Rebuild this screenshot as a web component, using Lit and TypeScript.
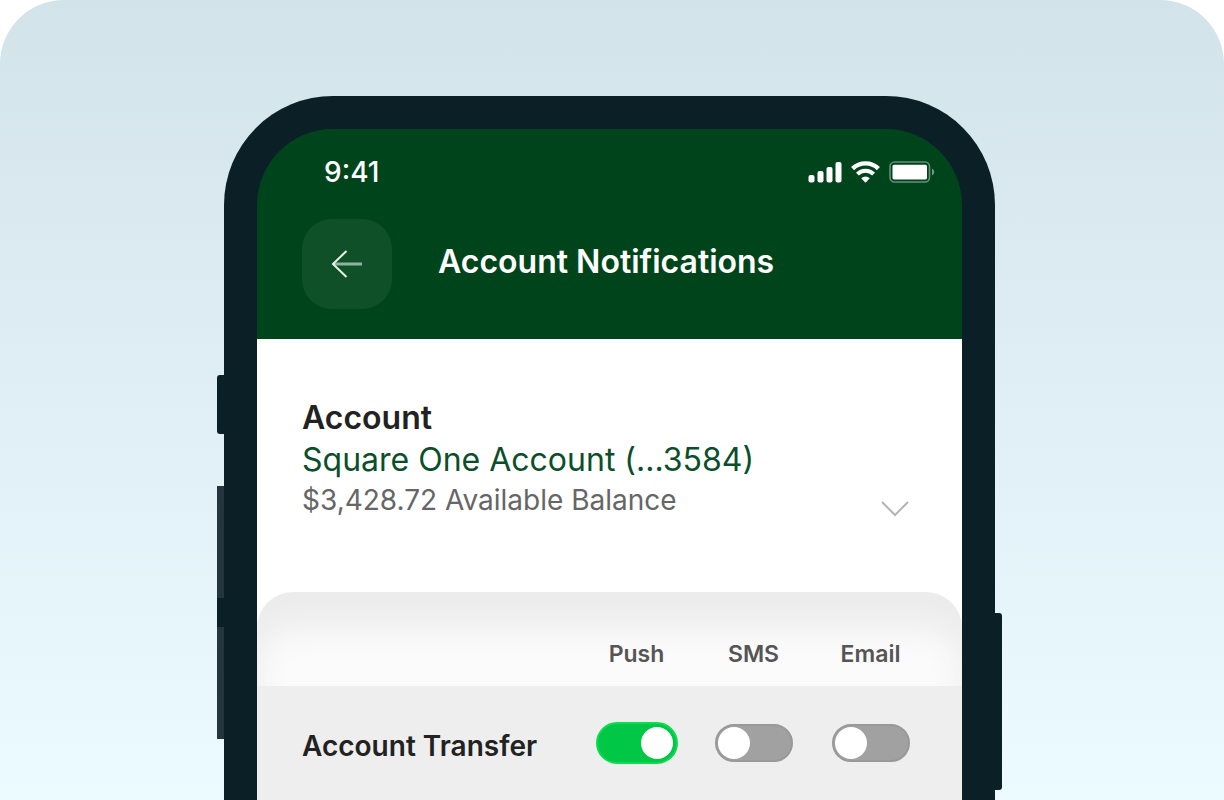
import { LitElement, html, css } from "lit";
import { customElement, property, state } from "lit/decorators.js";

type Channel = "push" | "sms" | "email";

interface AlertRow {
  id: string;
  name: string;
  on: Record<Channel, boolean>;
}

const CHANNELS: { id: Channel; label: string }[] = [
  { id: "push", label: "Push" },
  { id: "sms", label: "SMS" },
  { id: "email", label: "Email" },
];

@customElement("status-bar")
export class StatusBar extends LitElement {
  @property() time = "9:41";

  static styles = css`
    :host {
      display: flex;
      align-items: center;
      justify-content: space-between;
      height: 86px;
      padding: 0 27px 0 67px;
    }
    .time {
      font-size: 28px;
      line-height: 32px;
      font-weight: 500;
    }
    .icons {
      display: flex;
      align-items: center;
      gap: 9px;
    }
    svg {
      display: block;
    }
  `;

  render() {
    return html`
      <span class="time">${this.time}</span>
      <span class="icons">
        <svg width="34" height="22" viewBox="0 0 34 22" fill="#fff" aria-hidden="true">
          <rect x="0.5" y="14" width="6" height="7.5" rx="2" />
          <rect x="9.5" y="10" width="6" height="11.5" rx="2" />
          <rect x="18.5" y="6" width="6" height="15.5" rx="2" />
          <rect x="27.5" y="1" width="6" height="20.5" rx="2" />
        </svg>
        <svg width="29" height="22" viewBox="0 0 29 22" fill="none" aria-hidden="true">
          <path d="M1.6 7.6A18.6 18.6 0 0 1 27.4 7.6" stroke="#fff" stroke-width="4.4" />
          <path d="M6.4 13.2A11.4 11.4 0 0 1 22.6 13.2" stroke="#fff" stroke-width="4" />
          <path d="M14.5 21.8L10.2 17.2A6 6 0 0 1 18.8 17.2Z" fill="#fff" />
        </svg>
        <svg width="46" height="22" viewBox="0 0 46 22" fill="none" aria-hidden="true">
          <rect x="1" y="1" width="39.5" height="20" rx="4.5" stroke="#fff" stroke-opacity="0.4" stroke-width="1.6" />
          <rect x="3.5" y="3.8" width="34.5" height="14.6" rx="1.6" fill="#fff" />
          <path d="M43 7.5V14.5C44.4 13.8 45.2 12.5 45.2 11S44.4 8.2 43 7.5Z" fill="#fff" fill-opacity="0.45" />
        </svg>
      </span>
    `;
  }
}

@customElement("app-root")
export class AppRoot extends LitElement {
  @state() private rows: AlertRow[] = [
    { id: "transfer", name: "Account Transfer", on: { push: true, sms: false, email: false } },
  ];

  static styles = css`
    :host {
      display: block;
      background: #fff;
      font-family: Inter, "Open Sans", sans-serif;
    }
    * {
      box-sizing: border-box;
    }
    .stage {
      display: flex;
      flex-direction: column;
      min-height: 100vh;
      padding: 96px 229px 0 224px;
      border-radius: 64px 64px 0 0;
      background: linear-gradient(#d2e3e9, #deedf4 42%, #ecfbff);
      overflow: hidden;
    }
    .phone {
      position: relative;
      flex: 1;
      display: flex;
      flex-direction: column;
      padding: 33px 33px 0;
      border-radius: 109px 109px 0 0;
      background: #0b1f27;
    }
    .key {
      position: absolute;
      width: 7px;
      background: #0b1f27;
    }
    .key.mute {
      left: -7px;
      top: 279px;
      height: 59px;
      border-radius: 3px 0 0 3px;
    }
    .key.volume {
      left: -7px;
      top: 390px;
      height: 253px;
      border-block: 112px solid #24353e;
    }
    .key.power {
      right: -7px;
      top: 517px;
      height: 177px;
      border-radius: 0 3px 3px 0;
    }
    .screen {
      flex: 1;
      display: flex;
      flex-direction: column;
      border-radius: 76px 76px 0 0;
      overflow: hidden;
    }
    .top {
      background: #00441b;
      color: #fff;
    }
    .bar {
      display: flex;
      align-items: center;
      gap: 46px;
      padding: 4px 45px 30px;
    }
    .back {
      display: grid;
      place-items: center;
      width: 90px;
      height: 90px;
      padding: 0;
      border: 0;
      border-radius: 30px;
      background: #0f5029;
      cursor: pointer;
    }
    .title {
      margin: 0;
      padding-bottom: 4px;
      font-size: 32px;
      line-height: 40px;
      font-weight: 600;
    }
    .body {
      flex: 1;
      display: flex;
      flex-direction: column;
      background: #fff;
    }
    .account {
      display: flex;
      align-items: flex-end;
      justify-content: space-between;
      padding: 58px 52px 72px 45px;
    }
    .heading {
      margin: 0;
      font-size: 32px;
      line-height: 42px;
      font-weight: 600;
      color: #222;
    }
    .name {
      margin: 0;
      font-size: 32px;
      line-height: 42px;
      color: #0a4f2a;
    }
    .balance {
      margin: 0;
      font-size: 28px;
      line-height: 39px;
      color: #666;
    }
    .pick {
      display: block;
      padding: 0;
      border: 0;
      background: none;
      cursor: pointer;
    }
    .pick svg {
      display: block;
    }
    .alerts {
      flex: 1;
      border-radius: 36px 36px 0 0;
      background: #eee;
      overflow: hidden;
    }
    table {
      width: 100%;
      border-collapse: collapse;
      table-layout: fixed;
      background: #fbfbfb;
      border-radius: 36px 36px 0 0;
      box-shadow: inset 0 36px 32px #ececec;
    }
    tbody {
      background: #eee;
    }
    .first {
      padding: 0 0 0 45px;
      text-align: left;
    }
    .channel {
      width: 117px;
      padding: 0;
      text-align: center;
    }
    .gutter {
      width: 33px;
      padding: 0;
    }
    thead .channel {
      height: 94px;
      padding-top: 30px;
      font-size: 23px;
      line-height: 32px;
      font-weight: 600;
      color: #555;
    }
    tbody th,
    tbody td {
      height: 114px;
      padding-top: 4px;
    }
    tbody .first {
      padding-top: 6px;
      font-size: 28px;
      line-height: 36px;
      font-weight: 600;
      color: #222;
      white-space: nowrap;
    }
    .switch {
      appearance: none;
      display: block;
      width: 78px;
      height: 38px;
      margin: 0 auto;
      padding: 1px;
      border: 2px solid #999;
      border-radius: 21px;
      background: #a1a1a1;
      cursor: pointer;
    }
    .switch::before {
      content: "";
      display: block;
      width: 32px;
      height: 32px;
      border-radius: 50%;
      background: #fff;
    }
    .switch:checked {
      width: 82px;
      height: 42px;
      padding: 3px;
      border-color: #0cdc50;
      background: #00c745;
    }
    .switch:checked::before {
      margin-left: auto;
    }
  `;

  private toggle(row: AlertRow, channel: Channel) {
    this.rows = this.rows.map((r) =>
      r === row ? { ...r, on: { ...r.on, [channel]: !r.on[channel] } } : r
    );
  }

  render() {
    return html`
      <main class="stage">
        <div class="phone">
          <span class="key mute"></span>
          <span class="key volume"></span>
          <span class="key power"></span>
          <div class="screen">
            <header class="top">
              <status-bar></status-bar>
              <div class="bar">
                <button class="back" aria-label="Back">
                  <svg width="32" height="28" viewBox="0 0 32 28" fill="none" aria-hidden="true">
                    <path d="M2 14H31" stroke="#8fb39b" stroke-width="3" />
                    <path d="M15.5 1L2 14L15.5 27" stroke="#e8f3e6" stroke-width="2" />
                  </svg>
                </button>
                <h1 class="title">Account Notifications</h1>
              </div>
            </header>

            <div class="body">
              <section class="account">
                <div>
                  <h2 class="heading">Account</h2>
                  <p class="name">Square One Account (...3584)</p>
                  <p class="balance">$3,428.72 Available Balance</p>
                </div>
                <button class="pick" aria-label="Choose account">
                  <svg width="30" height="20" viewBox="0 0 30 20" fill="none" aria-hidden="true">
                    <path d="M2 2L15 15L28 2" stroke="#b4b4b4" stroke-width="2" />
                  </svg>
                </button>
              </section>

              <section class="alerts">
                <table>
                  <thead>
                    <tr>
                      <td class="first"></td>
                      ${CHANNELS.map(
                        (c) => html`<th class="channel" id=${c.id} scope="col">${c.label}</th>`
                      )}
                      <td class="gutter"></td>
                    </tr>
                  </thead>
                  <tbody>
                    ${this.rows.map(
                      (row) => html`
                        <tr>
                          <th class="first" id=${row.id} scope="row">${row.name}</th>
                          ${CHANNELS.map(
                            (c) => html`
                              <td class="channel">
                                <input
                                  class="switch"
                                  type="checkbox"
                                  role="switch"
                                  aria-labelledby="${row.id} ${c.id}"
                                  .checked=${row.on[c.id]}
                                  @change=${() => this.toggle(row, c.id)}
                                />
                              </td>
                            `
                          )}
                          <td class="gutter"></td>
                        </tr>
                      `
                    )}
                  </tbody>
                </table>
              </section>
            </div>
          </div>
        </div>
      </main>
    `;
  }
}
